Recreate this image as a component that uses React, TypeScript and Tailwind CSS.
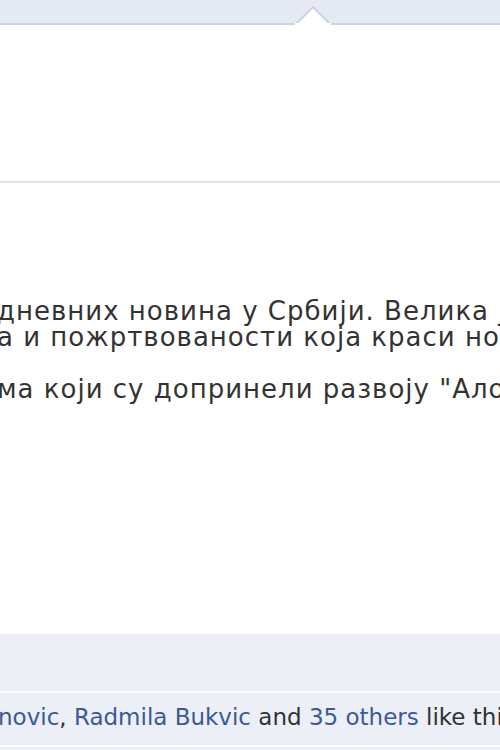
export default function App() {
  return (
    <div className="w-[500px] h-[750px] overflow-hidden bg-white flex flex-col font-['DejaVu_Sans','Liberation_Sans',sans-serif]">
      <div className="relative h-[25px] shrink-0 bg-[#e5e9f2] border-b-2 border-[#ccd3e6]">
        <svg className="absolute left-[295px] top-[6px]" width="36" height="19" viewBox="0 0 36 19">
          <polygon points="0,19 18,1 36,19" fill="#ffffff" stroke="#ccd3e6" strokeWidth="2" />
          <rect x="0" y="17" width="36" height="2" fill="#ffffff" />
        </svg>
      </div>
      <div className="h-[156px] shrink-0 bg-white" />
      <div className="h-[2px] shrink-0 bg-[#e3e3e3]" />
      <div className="h-[451px] shrink-0 bg-white overflow-hidden">
        <div className="pt-[115px] ml-[-3px] whitespace-nowrap text-[26px] leading-[26px] text-[#333333] tracking-[1px]">
          <div>дневних новина у Србији. Велика је</div>
          <div>а и пожртвованости која краси новинаре</div>
          <div>&nbsp;</div>
          <div>ма који су допринели развоју "Ало!"</div>
        </div>
      </div>
      <div className="h-[57px] shrink-0 bg-[#eceff5]" />
      <div className="h-[2px] shrink-0 bg-white" />
      <div className="h-[52px] shrink-0 bg-[#eceff5] overflow-hidden">
        <div className="pt-[11px] ml-[-2px] whitespace-nowrap text-[23px] leading-[26px] text-[#333333]">
          <span className="text-[#3b5998]">novic</span>, <span className="text-[#3b5998]">Radmila Bukvic</span> and{" "}
          <span className="text-[#3b5998]">35 others</span> like this.
        </div>
      </div>
      <div className="h-[2px] shrink-0 bg-white" />
      <div className="flex-1 bg-[#eceff5]" />
    </div>
  );
}
